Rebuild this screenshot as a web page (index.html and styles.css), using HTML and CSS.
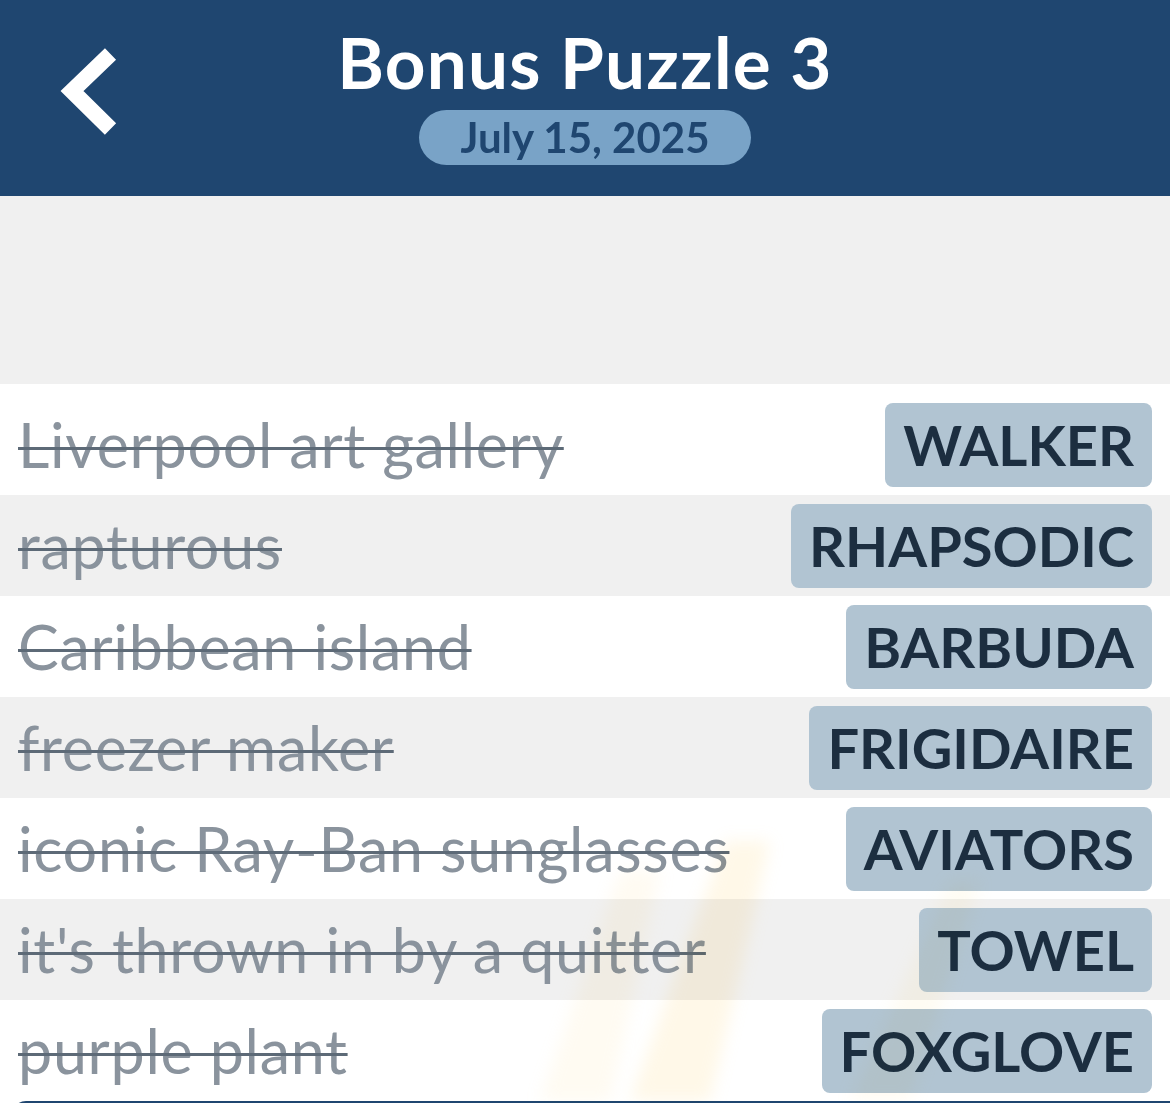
FILE: index.html
```html
<!DOCTYPE html>
<html lang="en">
<head>
<meta charset="utf-8">
<title>Bonus Puzzle 3</title>
<link rel="stylesheet" href="styles.css">
</head>
<body>
<div class="screen">
  <header class="topbar">
    <div class="back">
      <svg class="back-icon" width="70" height="100" viewBox="0 0 70 100" aria-hidden="true">
        <polyline points="50.5,9 12,46 50.5,84" fill="none" stroke="#ffffff" stroke-width="16" stroke-linejoin="miter" stroke-linecap="butt"/>
      </svg>
    </div>
    <div class="title-block">
      <h1 class="title">Bonus Puzzle 3</h1>
      <div class="date">July 15, 2025</div>
    </div>
    <div class="side"></div>
  </header>
  <div class="banner"></div>
  <main class="list">
    <div class="row"><span class="clue">Liverpool art gallery</span><span class="answer">WALKER</span></div>
    <div class="row"><span class="clue">rapturous</span><span class="answer">RHAPSODIC</span></div>
    <div class="row"><span class="clue">Caribbean island</span><span class="answer">BARBUDA</span></div>
    <div class="row"><span class="clue">freezer maker</span><span class="answer">FRIGIDAIRE</span></div>
    <div class="row"><span class="clue">iconic Ray-Ban sunglasses</span><span class="answer">AVIATORS</span></div>
    <div class="row"><span class="clue">it's thrown in by a quitter</span><span class="answer">TOWEL</span></div>
    <div class="row"><span class="clue">purple plant</span><span class="answer">FOXGLOVE</span></div>
    <svg class="rays" width="1170" height="260" viewBox="0 0 1170 260" aria-hidden="true">
      <polygon points="540,260 610,260 660,30 620,30" fill="#ffe6a0" opacity="0.14"/>
      <polygon points="630,260 710,260 770,0 725,0" fill="#ffd66e" opacity="0.16"/>
      <polygon points="850,260 910,260 980,40 950,40" fill="#ffe6a0" opacity="0.12"/>
    </svg>
  </main>
  <div class="bottom-bar"></div>
</div>
</body>
</html>
```
FILE: styles.css
```css
* { box-sizing: border-box; }

html, body {
  margin: 0;
  padding: 0;
  background: #ffffff;
}

body {
  font-family: "Lato", "Noto Sans", sans-serif;
  overflow: hidden;
}

.screen {
  width: 1170px;
  height: 1103px;
  overflow: hidden;
  display: flex;
  flex-direction: column;
}

.topbar {
  height: 196px;
  flex: none;
  background: #1f4670;
  display: grid;
  grid-template-columns: 1fr auto 1fr;
}

.back {
  padding: 45px 0 0 60px;
}

.back-icon {
  display: block;
}

.title-block {
  display: flex;
  flex-direction: column;
  align-items: center;
  padding-top: 22px;
}

.title {
  margin: 0;
  color: #ffffff;
  font-size: 71px;
  line-height: 80px;
  font-weight: 700;
  letter-spacing: 1.2px;
}

.date {
  margin-top: 8px;
  height: 55px;
  padding: 0 41px;
  border-radius: 28px;
  background: #79a3c7;
  color: #1f4670;
  font-size: 42px;
  font-weight: 700;
  line-height: 55px;
}

.banner {
  height: 188px;
  flex: none;
  background: #f0f0f0;
}

.list {
  position: relative;
  background: #ffffff;
  padding-top: 10px;
  flex: none;
}

.row {
  height: 101px;
  display: flex;
  align-items: center;
  justify-content: space-between;
  padding: 1px 18px 0 18px;
}

.row:nth-child(even) {
  background: #f0f0f0;
}

.clue {
  color: #8a939d;
  font-size: 61px;
  line-height: 84px;
  letter-spacing: 0.7px;
  text-decoration: line-through;
  text-decoration-color: #5d6a77;
  text-decoration-thickness: 3px;
  white-space: nowrap;
}

.answer {
  height: 84px;
  padding: 0 18px;
  border-radius: 8px;
  background: #b1c4d2;
  color: #1c2e40;
  font-size: 56px;
  font-weight: 700;
  line-height: 84px;
  white-space: nowrap;
}

.rays {
  position: absolute;
  left: 0;
  bottom: 0;
  pointer-events: none;
  mix-blend-mode: multiply;
  filter: blur(8px);
}

.bottom-bar {
  flex: none;
  height: 20px;
  margin-left: 12px;
  background: #1f4670;
  border-radius: 14px 0 0 0;
}
```
